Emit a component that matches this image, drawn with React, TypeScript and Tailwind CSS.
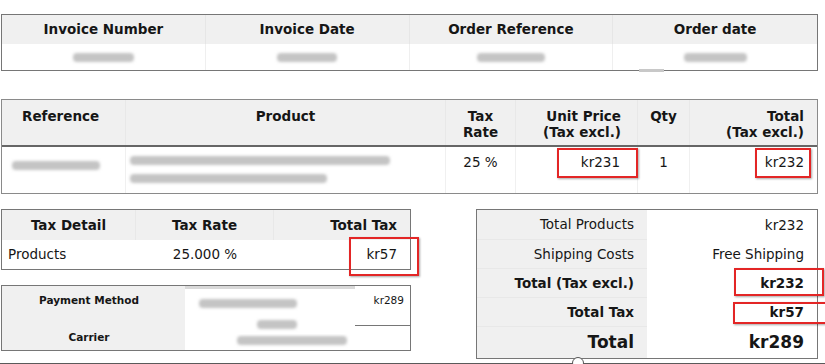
import React from "react";

const Blur: React.FC<{ w: number; className?: string }> = ({ w, className }) => (
  <span
    className={"inline-block h-[9px] rounded-sm bg-[#c4c4c4] blur-[1.5px] " + (className || "")}
    style={{ width: w }}
  />
);

const RedBox: React.FC<{ className: string }> = ({ className }) => (
  <div
    className={
      "absolute border-2 border-[#e32626] shadow-[1px_1px_2px_rgba(0,0,0,0.35)] pointer-events-none " + className
    }
  />
);

const App: React.FC = () => {
  return (
    <div className="relative w-[825px] h-[364px] overflow-hidden bg-white text-[13.5px] text-[#161616] font-['DejaVu_Sans',sans-serif]">
      <div className="pt-[14px]">
        {/* Invoice header */}
        <div className="ml-[1px] w-[817px] border border-[#767676]">
          <div className="grid grid-cols-4 h-[29px] bg-[#f0f0f0] font-bold">
            <div className="flex items-center justify-center border-r border-[#e6e6e6]">Invoice Number</div>
            <div className="flex items-center justify-center border-r border-[#e6e6e6]">Invoice Date</div>
            <div className="flex items-center justify-center border-r border-[#e6e6e6]">Order Reference</div>
            <div className="flex items-center justify-center">Order date</div>
          </div>
          <div className="grid grid-cols-4 h-[26px]">
            <div className="flex items-center justify-center border-r border-[#efefef]"><Blur w={61} /></div>
            <div className="flex items-center justify-center border-r border-[#efefef]"><Blur w={60} /></div>
            <div className="flex items-center justify-center border-r border-[#efefef]"><Blur w={68} /></div>
            <div className="flex items-center justify-center"><Blur w={63} /></div>
          </div>
        </div>

        {/* Products */}
        <div className="mt-[28px] ml-[1px] w-[817px] border border-[#8a8a8a]">
          <div className="grid grid-cols-[124px_320px_70px_122px_52px_127px] h-[47px] bg-[#f0f0f0] font-bold leading-[16px] border-b-2 border-[#666]">
            <div className="pt-[8px] pl-[20px] border-r border-[#e8e8e8]">Reference</div>
            <div className="pt-[8px] text-center border-r border-[#e8e8e8]">Product</div>
            <div className="pt-[8px] text-center border-r border-[#e8e8e8]">Tax<br />Rate</div>
            <div className="pt-[8px] pr-[16px] text-right border-r border-[#e8e8e8]">Unit Price<br />(Tax excl.)</div>
            <div className="pt-[8px] text-center border-r border-[#e8e8e8]">Qty</div>
            <div className="pt-[8px] pr-[13px] text-right">Total<br />(Tax excl.)</div>
          </div>
          <div className="grid grid-cols-[124px_320px_70px_122px_52px_127px] h-[46px] leading-[16px]">
            <div className="pt-[10px] pl-[10px] border-r border-[#f0f0f0]"><Blur w={88} /></div>
            <div className="pt-[9px] pl-[4px] flex flex-col gap-[9px] border-r border-[#f0f0f0]">
              <Blur w={260} />
              <Blur w={197} />
            </div>
            <div className="pt-[7px] text-center border-r border-[#f0f0f0]">25 %</div>
            <div className="pt-[7px] pr-[17px] text-right border-r border-[#f0f0f0]">kr231</div>
            <div className="pt-[7px] text-center border-r border-[#f0f0f0]">1</div>
            <div className="pt-[7px] pr-[13px] text-right">kr232</div>
          </div>
        </div>

        {/* Bottom section */}
        <div className="mt-[15px] flex">
          <div className="ml-[1px] w-[410px]">
            <div className="border border-[#767676]">
              <div className="grid grid-cols-[134px_138px_136px] h-[30px] bg-[#f0f0f0] font-bold items-center">
                <div className="text-center border-r border-[#e8e8e8] h-full flex items-center justify-center">Tax Detail</div>
                <div className="text-center border-r border-[#e8e8e8] h-full flex items-center justify-center">Tax Rate</div>
                <div className="pr-[13px] text-right">Total Tax</div>
              </div>
              <div className="grid grid-cols-[134px_138px_136px] h-[29px] items-center">
                <div className="pl-[6px]">Products</div>
                <div className="text-center">25.000 %</div>
                <div className="pr-[13px] text-right">kr57</div>
              </div>
            </div>

            <div className="mt-[15px] border border-[#767676] text-[10.5px]">
              <div className="grid grid-cols-[183px_170px_55px] h-[40px] border-b border-[#767676]">
                <div className="bg-[#f0f0f0] pt-[7px] pr-[9px] text-center font-bold">Payment Method</div>
                <div className="bg-white -mb-[1px] relative z-10">
                  <div className="h-[3px] bg-[#d9d9d9]" />
                  <div className="pt-[8px] pl-[14px]"><Blur w={98} /></div>
                  <div className="pt-[5px] pl-[72px]"><Blur w={40} /></div>
                </div>
                <div className="pt-[7px] pr-[6px] text-right">kr289</div>
              </div>
              <div className="grid grid-cols-[183px_170px_55px] h-[24px]">
                <div className="bg-[#f0f0f0] pr-[9px] flex items-center justify-center font-bold">Carrier</div>
                <div className="bg-white">
                  <div className="h-[3px] bg-[#d9d9d9]" />
                  <div className="pt-[5px] pl-[52px]"><Blur w={110} /></div>
                </div>
                <div />
              </div>
            </div>
          </div>

          {/* Totals */}
          <div className="ml-[65px] w-[342px] h-[150px] border border-[#767676] grid grid-cols-[170px_170px] grid-rows-[30px_29px_29px_29px_31px]">
            <div className="bg-[#f0f0f0] border-b border-[#e8e8e8] pr-[13px] flex items-center justify-end">Total Products</div>
            <div className="pr-[13px] flex items-center justify-end">kr232</div>
            <div className="bg-[#f0f0f0] border-b border-[#e8e8e8] pr-[13px] flex items-center justify-end">Shipping Costs</div>
            <div className="pr-[13px] flex items-center justify-end">Free Shipping</div>
            <div className="bg-[#f0f0f0] border-b border-[#e8e8e8] pr-[13px] flex items-center justify-end font-bold">Total (Tax excl.)</div>
            <div className="pr-[13px] flex items-center justify-end font-bold">kr232</div>
            <div className="bg-[#f0f0f0] border-b border-[#e8e8e8] pr-[13px] flex items-center justify-end font-bold">Total Tax</div>
            <div className="pr-[13px] flex items-center justify-end font-bold">kr57</div>
            <div className="bg-[#f0f0f0] pr-[13px] flex items-center justify-end font-bold text-[17px]">Total</div>
            <div className="pr-[13px] flex items-center justify-end font-bold text-[17px]">kr289</div>
          </div>
        </div>

        <div className="mt-[4px] border-t border-[#5a5a5a]" />
      </div>

      {/* little scroll marker under the header table */}
      <div className="absolute left-[639px] top-[69px] w-[25px] h-[3px] bg-[#c8c8c8]" />
      {/* connector dot */}
      <div className="absolute left-[572px] top-[357px] w-[12px] h-[12px] rounded-full bg-white border border-[#555]" />

      {/* annotation boxes */}
      <RedBox className="left-[557px] top-[148px] w-[81px] h-[30px]" />
      <RedBox className="left-[755px] top-[148px] w-[56px] h-[30px]" />
      <RedBox className="left-[349px] top-[237px] w-[70px] h-[39px]" />
      <RedBox className="left-[734px] top-[268px] w-[90px] h-[28px]" />
      <RedBox className="left-[733px] top-[302px] w-[100px] h-[22px]" />
    </div>
  );
};

export default App;
